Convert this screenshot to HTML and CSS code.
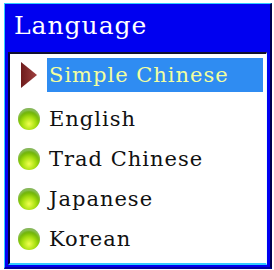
FILE: index.html
```html
<!DOCTYPE html>
<html lang="en">
<head>
    <meta charset="UTF-8">
    <meta name="viewport" content="width=device-width, initial-scale=1.0">
    <link rel="stylesheet" href="styles.css">
    <title>Language</title>
</head>
<body>
    <div class="frame">
        <div class="title">Language</div>
        <div class="list">
            <div class="item selected">
                <span class="mark">
                    <svg width="18" height="28" viewBox="0 0 18 28">
                        <defs>
                            <linearGradient id="arrowFill" x1="0" y1="0" x2="1" y2="0">
                                <stop offset="0" stop-color="#6e1c1c"/>
                                <stop offset="1" stop-color="#a04040"/>
                            </linearGradient>
                        </defs>
                        <polygon points="1,1 17,14 1,27" fill="url(#arrowFill)"/>
                    </svg>
                </span>
                <span class="label">Simple Chinese</span>
            </div>
            <div class="item">
                <span class="mark"><span class="ball"></span></span>
                <span class="label">English</span>
            </div>
            <div class="item">
                <span class="mark"><span class="ball"></span></span>
                <span class="label">Trad Chinese</span>
            </div>
            <div class="item">
                <span class="mark"><span class="ball"></span></span>
                <span class="label">Japanese</span>
            </div>
            <div class="item">
                <span class="mark"><span class="ball"></span></span>
                <span class="label">Korean</span>
            </div>
        </div>
    </div>
</body>
</html>
```

FILE: styles.css
```css
body {
    margin: 0;
    padding: 0;
    background-color: #ffffff;
    font-family: "DejaVu Serif", serif;
}

.frame {
    margin: 3px 0 0 4px;
    width: 268px;
    height: 266px;
    box-sizing: border-box;
    background-color: #0000f0;
    border-left: 1px solid #33ccff;
    border-top: 1px solid #33ccff;
    border-right: 2px solid #000050;
    border-bottom: 2px solid #0000a0;
    padding: 0 3px 2px 3px;
    display: flex;
    flex-direction: column;
}

.title {
    height: 48px;
    line-height: 44px;
    padding-left: 6px;
    color: #ffffff;
    font-size: 25px;
    letter-spacing: 1px;
}

.list {
    flex-grow: 1;
    background-color: #ffffff;
    border-top: 2px solid #101030;
    border-left: 2px solid #000040;
    border-right: 1px solid #e8ffff;
    border-bottom: 2px solid #33ccff;
    padding-top: 3px;
}

.item {
    display: flex;
    align-items: center;
    height: 40px;
    color: #111111;
    font-size: 21px;
    letter-spacing: 1px;
}

.mark {
    width: 37px;
    display: flex;
    justify-content: center;
    align-items: center;
    flex-shrink: 0;
}

.ball {
    width: 22px;
    height: 22px;
    border-radius: 50%;
    background: radial-gradient(circle at 50% 72%, #f0ff50 0%, #a8e010 35%, #4c9a00 75%, #2a5a10 100%);
    box-shadow: inset 0 3px 2px rgba(255, 255, 255, 0.35);
}

.label {
    padding-left: 2px;
}

.selected {
    height: 36px;
    margin-bottom: 6px;
}

.selected .label {
    flex-grow: 1;
    margin-right: 3px;
    height: 34px;
    line-height: 34px;
    background-color: #2f8cf2;
    color: #f2ffa0;
}
```
